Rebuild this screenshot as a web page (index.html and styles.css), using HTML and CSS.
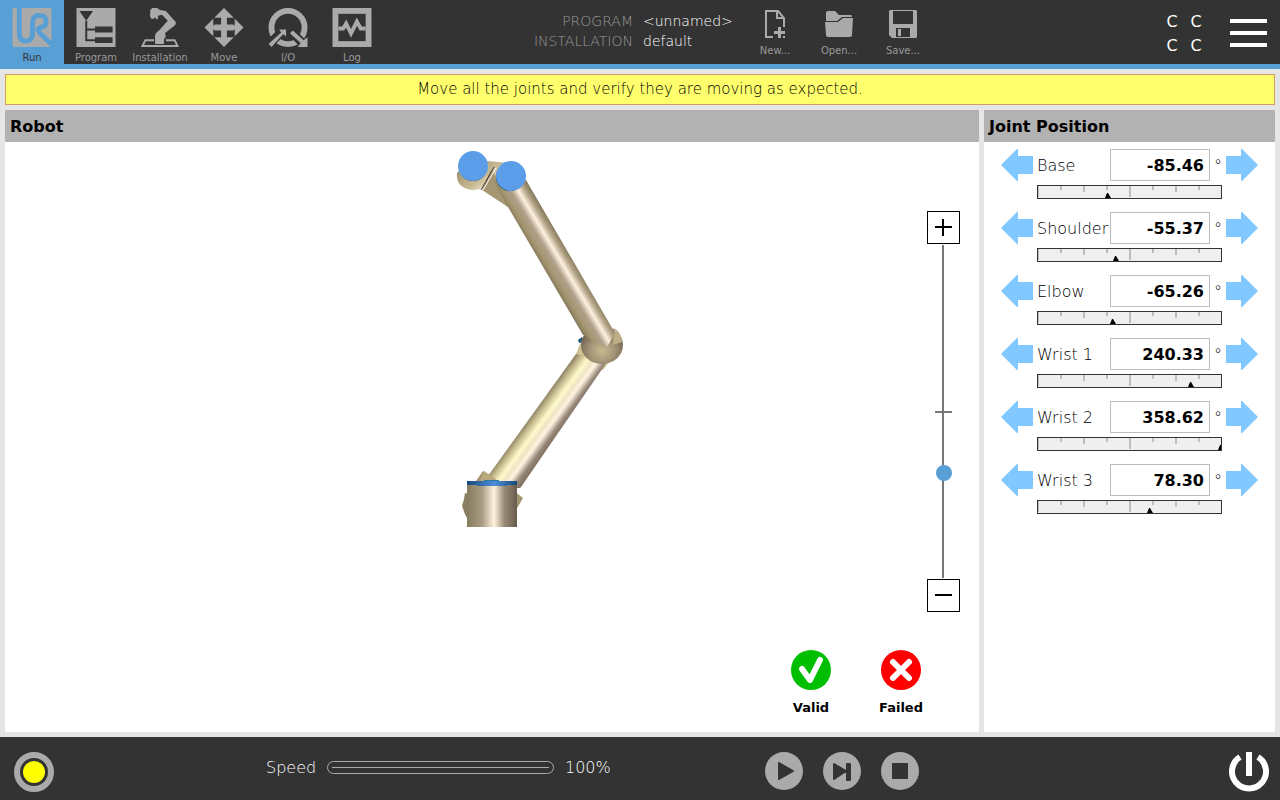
FILE: index.html
```html
<!DOCTYPE html>
<html lang="en">
<head>
  <meta charset="UTF-8">
  <title>Joint check</title>
  <link rel="stylesheet" href="styles.css">
</head>
<body>
  <!-- shared shapes -->
  <svg class="defs" aria-hidden="true">
    <symbol id="arrow-left" viewBox="0 0 32 32"><path d="M0 16L16 0h1v7h15v18H17v7h-1z"/></symbol>
    <symbol id="arrow-right" viewBox="0 0 32 32"><path d="M32 16L16 0h-1v7H0v18h15v7h1z"/></symbol>
    <g id="ticks" fill="#bdbdbd">
      <path d="M0 0h1v11h-1zM22 0h2v4h-2zM45 0h2v6h-2zM68 0h2v4h-2zM91 0h2v11h-2zM114 0h2v4h-2zM137 0h2v6h-2zM160 0h2v4h-2z"/>
    </g>
    <path id="marker" d="M-3 12L-1 7h1l3 5z"/>
  </svg>

  <header class="header">
    <nav class="tabs">
      <button class="tab active">
        <svg viewBox="0 0 40 40" width="40" height="40">
          <rect width="40" height="40" rx="2" fill="#aaa"/>
          <path d="M7 0V27q0 7 6.500 7t7-7V15q0-7.500 7-7.500t7 6.500q0 5-6 6-4 1-1 5 3 3 14 14" fill="none" stroke="#589fd5" stroke-width="5"/>
        </svg>
        <span>Run</span>
      </button>
      <button class="tab">
        <svg viewBox="0 0 40 40" width="40" height="40">
          <rect width="40" height="40" fill="#aaa"/>
          <path d="M3 3h14l-7 10zM19 19h18v6H19zM19 30h18v6H19z" fill="#333"/>
          <path d="M10 13v20h9M10 22h9" fill="none" stroke="#333" stroke-width="2"/>
        </svg>
        <span>Program</span>
      </button>
      <button class="tab">
        <svg viewBox="0 0 40 40" width="40" height="40" fill="#aaa">
          <path d="M10 2l2-2h5l3 2 6 1 8 9q4 3 1 6l-10 8q2 4-1 6v5H15v-6q-1-5 4-8l9-10-6-6-4 1v3l-2 1v-2h-2v1h-3q-2-2-1-5z"/>
          <path d="M14 33H5L2 39h36l-3-6h-9" fill="none" stroke="#aaa" stroke-width="2"/>
        </svg>
        <span>Installation</span>
      </button>
      <button class="tab">
        <svg viewBox="0 0 40 40" width="40" height="40">
          <path d="M20 0l20 20-20 20L0 20z" fill="#aaa"/>
          <path d="M9 10h8v7h-7v1H9zM31 10h-8v7h7v1h1zM9 30h8v-7h-7v-1H9zM31 30h-8v-7h7v-1h1z" fill="#333"/>
        </svg>
        <span>Move</span>
      </button>
      <button class="tab">
        <svg viewBox="0 0 40 40" width="40" height="40">
          <circle cx="20" cy="20" r="17" fill="none" stroke="#aaa" stroke-width="6"/>
          <path d="M-1 39l17-17M23 24l17 17" stroke="#333" stroke-width="9"/>
          <path d="M11 22h7v7l-3-2L3 40l-3-3 13-12zM25 23l11 10 4-3v10H30l3-4-11-10z" fill="#aaa"/>
        </svg>
        <span>I/O</span>
      </button>
      <button class="tab">
        <svg viewBox="0 0 40 40" width="40" height="40">
          <rect width="40" height="40" rx="1" fill="#aaa"/>
          <path d="M6 6h28v28H6z" fill="#333"/>
          <path d="M6 21h5l3-5 5 10 6-12 4 7h5" fill="none" stroke="#aaa" stroke-width="4"/>
        </svg>
        <span>Log</span>
      </button>
    </nav>

    <dl class="info">
      <dt>PROGRAM</dt><dd>&lt;unnamed&gt;</dd>
      <dt>INSTALLATION</dt><dd>default</dd>
    </dl>

    <div class="files">
      <button class="file">
        <svg viewBox="0 0 32 28" width="32" height="28">
          <path d="M14 27H7V1h12l6 7v9M18 1v7h7" fill="none" stroke="#aaa" stroke-width="2"/>
          <path d="M19 17h3v4h4v3h-4v4h-3v-4h-4v-3h4zM24 26h2v2h-2z" fill="#aaa"/>
        </svg>
        <span>New...</span>
      </button>
      <button class="file">
        <svg viewBox="0 0 32 28" width="32" height="28">
          <path d="M3 3q0-2 2-2h7l4 4h12q1 0 1 2H19l-5 4H3z" fill="#aaa"/>
          <path d="M2 12h13l5-4h10l-1 17q0 2-2 2H5q-2 0-2-2z" fill="#aaa"/>
        </svg>
        <span>Open...</span>
      </button>
      <button class="file">
        <svg viewBox="0 0 32 28" width="32" height="28">
          <path d="M3 0h26l1 1v26l-1 1H5l-3-3V1z" fill="#aaa"/>
          <path d="M6 1h20v13H6zM9 18h14v9H9z" fill="#333"/>
          <path d="M11 19h3v7h-3z" fill="#aaa"/>
        </svg>
        <span>Save...</span>
      </button>
    </div>

    <div class="checksum">
      <span>C</span><span>C</span><span>C</span><span>C</span>
    </div>
    <button class="menu" aria-label="Menu">
      <svg viewBox="0 0 37 28" width="37" height="28">
        <path d="M0 2h37M0 14h37M0 26h37" stroke="#fff" stroke-width="4"/>
      </svg>
    </button>
  </header>

  <main class="main">
    <p class="banner">Move all the joints and verify they are moving as expected.</p>

    <div class="panels">
      <section class="panel robot">
        <h2>Robot</h2>
        <div class="view">
          <svg class="arm" viewBox="357 142 270 390" width="270" height="390">
            <defs>
              <linearGradient id="upper" gradientUnits="userSpaceOnUse" x1="545" y1="270" x2="570" y2="255">
                <stop offset="0" stop-color="#897c5e"/>
                <stop offset=".15" stop-color="#a3956f"/>
                <stop offset=".4" stop-color="#b0a08a"/>
                <stop offset=".62" stop-color="#fff2e0"/>
                <stop offset=".82" stop-color="#b5a689"/>
                <stop offset="1" stop-color="#887b5e"/>
              </linearGradient>
              <linearGradient id="lower" gradientUnits="userSpaceOnUse" x1="533" y1="413" x2="563" y2="435">
                <stop offset="0" stop-color="#8d8262"/>
                <stop offset=".14" stop-color="#c5b98e"/>
                <stop offset=".33" stop-color="#fffacb"/>
                <stop offset=".46" stop-color="#efe5c4"/>
                <stop offset=".58" stop-color="#fff4e2"/>
                <stop offset=".76" stop-color="#968678"/>
                <stop offset="1" stop-color="#6e6052"/>
              </linearGradient>
              <linearGradient id="base">
                <stop offset="0" stop-color="#877b5e"/>
                <stop offset=".3" stop-color="#aa9c82"/>
                <stop offset=".54" stop-color="#fff3df"/>
                <stop offset=".75" stop-color="#978a75"/>
                <stop offset="1" stop-color="#685b4b"/>
              </linearGradient>
              <linearGradient id="lid">
                <stop offset="0" stop-color="#174a7c"/>
                <stop offset=".55" stop-color="#508edb"/>
                <stop offset="1" stop-color="#164577"/>
              </linearGradient>
              <radialGradient id="elbow" cx=".5" cy=".65" r=".6">
                <stop offset="0" stop-color="#c8bb8e"/>
                <stop offset=".5" stop-color="#a39478"/>
                <stop offset="1" stop-color="#6d5e4d"/>
              </radialGradient>
              <linearGradient id="wrist" x1="0" y1="0" x2="1" y2="1">
                <stop offset="0" stop-color="#8e805f"/>
                <stop offset=".4" stop-color="#c6b993"/>
                <stop offset=".55" stop-color="#eee0cb"/>
                <stop offset="1" stop-color="#8c7f62"/>
              </linearGradient>
            </defs>
            <path d="M483 471l12 8 23 15 5 4-7 12-20-2-28 11q-5-7-6-14l4-10z" fill="#a39570"/>
            <path d="M463 505l2-12 3 1v25q-4-5-5-14z" fill="#8b7d61"/>
            <path d="M578 340l4-3 2 5-5 1z" fill="#235d7b"/>
            <path d="M580 344l7-7 22 25-6 8-27-16z" fill="#cec28f"/>
            <path d="M576 354L488 476v12h32l1-1 86-125z" fill="url(#lower)"/>
            <path d="M484 471l12 8-4 6-12-5z" fill="#b8aa7e"/>
            <path d="M457 173q-1 10 6 14 7 5 17 2l7-5 20 23 13-24-10-20-24-2-16-3z" fill="url(#wrist)"/>
            <path d="M482 190l26 17-10-29-7-8z" fill="#a69773"/>
            <path d="M494 167l-13 23" stroke="#41352b" stroke-width="1"/>
            <path d="M496 168l-13 22" stroke="#fff" stroke-width="1"/>
            <ellipse cx="602" cy="345" rx="21" ry="19" fill="url(#elbow)"/>
            <path d="M614 328q8 5 8 14l-9 3z" fill="#bdae85"/>
            <path d="M494 181l32-1 89 153-8 14-9-3-15-9-75-128z" fill="url(#upper)"/>
            <circle cx="473" cy="167" r="14" fill="#174562"/>
            <circle cx="473" cy="166" r="15" fill="#5b9de9"/>
            <circle cx="510" cy="177" r="14" fill="#174562"/>
            <circle cx="511" cy="176" r="15" fill="#5b9de9"/>
            <path d="M467 484h50v43h-50z" fill="url(#base)"/>
            <path d="M467 481h17v-1h15v1h18v4h-10v1h-30v-1h-10z" fill="url(#lid)"/>
            <path d="M484 480h15v1h-15z" fill="#2b7c9b"/>
          </svg>

          <div class="zoom">
            <button aria-label="Zoom in"><svg viewBox="0 0 17 17" width="17" height="17"><path d="M0 8h17M8 0v17" stroke="#000" stroke-width="2"/></svg></button>
            <input type="range" min="0" max="200" value="61" aria-label="Zoom">
            <button aria-label="Zoom out"><svg viewBox="0 0 17 17" width="17" height="17"><path d="M0 8h17" stroke="#000" stroke-width="2"/></svg></button>
          </div>
        </div>

        <div class="verdict">
          <button>
            <svg viewBox="0 0 40 40" width="40" height="40">
              <circle cx="20" cy="20" r="20" fill="#00be00"/>
              <path d="M11 19l8 11 10-20" fill="none" stroke="#fff" stroke-width="6" stroke-linecap="round" stroke-linejoin="round"/>
            </svg>
            <span>Valid</span>
          </button>
          <button>
            <svg viewBox="0 0 40 40" width="40" height="40">
              <circle cx="20" cy="20" r="20" fill="#f00"/>
              <path d="M12 12l16 16M28 12L12 28" stroke="#fff" stroke-width="6" stroke-linecap="round"/>
            </svg>
            <span>Failed</span>
          </button>
        </div>
      </section>

      <section class="panel joints">
        <h2>Joint Position</h2>
        <div class="joint-list">
          <div class="joint">
            <button aria-label="Base minus"><svg width="32" height="32"><use href="#arrow-left"/></svg></button>
            <label for="base-pos">Base</label>
            <input type="text" id="base-pos" value="-85.46">
            <span class="unit">°</span>
            <button aria-label="Base plus"><svg width="32" height="32"><use href="#arrow-right"/></svg></button>
            <svg class="gauge" viewBox="0 0 183 12"><use href="#ticks"/><use href="#marker" x="70"/></svg>
          </div>
          <div class="joint">
            <button aria-label="Shoulder minus"><svg width="32" height="32"><use href="#arrow-left"/></svg></button>
            <label for="shoulder-pos">Shoulder</label>
            <input type="text" id="shoulder-pos" value="-55.37">
            <span class="unit">°</span>
            <button aria-label="Shoulder plus"><svg width="32" height="32"><use href="#arrow-right"/></svg></button>
            <svg class="gauge" viewBox="0 0 183 12"><use href="#ticks"/><use href="#marker" x="78"/></svg>
          </div>
          <div class="joint">
            <button aria-label="Elbow minus"><svg width="32" height="32"><use href="#arrow-left"/></svg></button>
            <label for="elbow-pos">Elbow</label>
            <input type="text" id="elbow-pos" value="-65.26">
            <span class="unit">°</span>
            <button aria-label="Elbow plus"><svg width="32" height="32"><use href="#arrow-right"/></svg></button>
            <svg class="gauge" viewBox="0 0 183 12"><use href="#ticks"/><use href="#marker" x="75"/></svg>
          </div>
          <div class="joint">
            <button aria-label="Wrist 1 minus"><svg width="32" height="32"><use href="#arrow-left"/></svg></button>
            <label for="wrist1-pos">Wrist 1</label>
            <input type="text" id="wrist1-pos" value="240.33">
            <span class="unit">°</span>
            <button aria-label="Wrist 1 plus"><svg width="32" height="32"><use href="#arrow-right"/></svg></button>
            <svg class="gauge" viewBox="0 0 183 12"><use href="#ticks"/><use href="#marker" x="153"/></svg>
          </div>
          <div class="joint">
            <button aria-label="Wrist 2 minus"><svg width="32" height="32"><use href="#arrow-left"/></svg></button>
            <label for="wrist2-pos">Wrist 2</label>
            <input type="text" id="wrist2-pos" value="358.62">
            <span class="unit">°</span>
            <button aria-label="Wrist 2 plus"><svg width="32" height="32"><use href="#arrow-right"/></svg></button>
            <svg class="gauge" viewBox="0 0 183 12"><use href="#ticks"/><use href="#marker" x="183"/></svg>
          </div>
          <div class="joint">
            <button aria-label="Wrist 3 minus"><svg width="32" height="32"><use href="#arrow-left"/></svg></button>
            <label for="wrist3-pos">Wrist 3</label>
            <input type="text" id="wrist3-pos" value="78.30">
            <span class="unit">°</span>
            <button aria-label="Wrist 3 plus"><svg width="32" height="32"><use href="#arrow-right"/></svg></button>
            <svg class="gauge" viewBox="0 0 183 12"><use href="#ticks"/><use href="#marker" x="112"/></svg>
          </div>
        </div>
      </section>
    </div>
  </main>

  <footer class="footer">
    <button class="state" aria-label="Robot state">
      <svg viewBox="0 0 40 40" width="40" height="40">
        <circle cx="20" cy="20" r="17" fill="none" stroke="#aaa" stroke-width="6"/>
        <circle cx="20" cy="20" r="11" fill="#ff0"/>
      </svg>
    </button>
    <div class="speed">
      <label for="speed">Speed</label>
      <input type="range" id="speed" min="0" max="100" value="100">
      <output for="speed">100%</output>
    </div>
    <div class="transport">
      <button aria-label="Play">
        <svg viewBox="0 0 38 38" width="38" height="38">
          <circle cx="19" cy="19" r="19" fill="#aaa"/>
          <path d="M14 11l14 8-14 8z" fill="#333" stroke="#333" stroke-width="2" stroke-linejoin="round"/>
        </svg>
      </button>
      <button aria-label="Step">
        <svg viewBox="0 0 38 38" width="38" height="38">
          <circle cx="19" cy="19" r="19" fill="#aaa"/>
          <path d="M11 12l12 7-12 8zM24 12h3v16h-3z" fill="#333" stroke="#333" stroke-width="2" stroke-linejoin="round"/>
        </svg>
      </button>
      <button aria-label="Stop">
        <svg viewBox="0 0 38 38" width="38" height="38">
          <circle cx="19" cy="19" r="19" fill="#aaa"/>
          <rect x="11" y="11" width="16" height="16" rx="1" fill="#333"/>
        </svg>
      </button>
    </div>
    <button class="power" aria-label="Power">
      <svg viewBox="0 0 40 40" width="40" height="40">
        <path d="M11 5a17 17 0 1 0 18 0" fill="none" stroke="#fff" stroke-width="6"/>
        <path d="M17 0h6v24h-6z" fill="#fff"/>
      </svg>
    </button>
  </footer>
</body>
</html>
```

FILE: styles.css
```css
* {
  box-sizing: border-box;
}
body {
  margin: 0;
  min-height: 100vh;
  display: flex;
  flex-direction: column;
  font-family: "DejaVu Sans", sans-serif;
  font-weight: 200;
  font-size: 16px;
  color: #000;
  background: #e5e5e5;
}
button {
  margin: 0;
  padding: 0;
  border: none;
  background: none;
  font: inherit;
  color: inherit;
  cursor: pointer;
}
svg {
  display: block;
}
.defs {
  position: absolute;
  width: 0;
  height: 0;
}

/* header */
.header {
  display: flex;
  height: 69px;
  background: #333;
  border-bottom: 5px solid #589fd5;
}
.tabs,
.files {
  display: flex;
}
.tab,
.file {
  width: 64px;
  display: flex;
  flex-direction: column;
  align-items: center;
  font-size: 10px;
  font-weight: 400;
  line-height: 12px;
  color: #999;
}
.tab {
  padding-top: 8px;
  gap: 5px;
}
.file {
  padding-top: 10px;
  gap: 7px;
}
.tab.active {
  background: #589fd5;
  color: #333;
}
.info {
  display: grid;
  grid-template-columns: 249px 90px;
  column-gap: 10px;
  align-content: start;
  margin: 0 10px 0 0;
  padding-top: 11px;
  font-size: 14px;
  line-height: 20px;
}
.info dt {
  text-align: right;
  color: #999;
}
.info dd {
  margin: 0;
  color: #fff;
}
.checksum {
  display: grid;
  grid-template-columns: 24px 24px;
  grid-auto-rows: 24px;
  align-content: start;
  margin-left: auto;
  padding-top: 10px;
  font-size: 16px;
  font-weight: 400;
  line-height: 24px;
  text-align: center;
  color: #fff;
}
.menu {
  margin: 0 13px 0 22px;
  padding-top: 1px;
}

/* content */
.main {
  flex: 1;
  display: flex;
  flex-direction: column;
  gap: 5px;
  padding: 5px;
}
.banner {
  margin: 0;
  border: 1px solid #cc9e62;
  background: #ffff6e;
  font-size: 15px;
  line-height: 29px;
  text-align: center;
}
.panels {
  flex: 1;
  display: flex;
  gap: 5px;
}
.panel {
  background: #fff;
}
.panel h2 {
  margin: 0;
  padding: 1px 5px 0;
  background: #b2b2b2;
  font-size: 16px;
  font-weight: 700;
  line-height: 31px;
}
.robot {
  flex: 1;
  display: flex;
  flex-direction: column;
}
.view {
  flex: 1;
  display: grid;
  grid-template-columns: 1fr auto 1fr;
}
.arm {
  grid-column: 2;
}
.zoom {
  display: flex;
  flex-direction: column;
  align-items: center;
  gap: 1px;
  justify-self: end;
  padding: 69px 19px 0 0;
}
.zoom button {
  width: 33px;
  height: 33px;
  display: flex;
  align-items: center;
  justify-content: center;
  border: 1px solid #000;
  background: #fff;
}
.zoom input {
  -webkit-appearance: none;
  appearance: none;
  writing-mode: vertical-lr;
  direction: rtl;
  width: 17px;
  height: 333px;
  margin: 0;
  background:
    linear-gradient(#777, #777) center / 100% 2px no-repeat,
    linear-gradient(#777, #777) 7px 0 / 2px 100% no-repeat;
}
.zoom input::-webkit-slider-thumb {
  -webkit-appearance: none;
  width: 16px;
  height: 16px;
  border-radius: 50%;
  background: #589fd5;
}
.verdict {
  display: flex;
  justify-content: flex-end;
  padding: 0 33px 16px 0;
}
.verdict button {
  width: 90px;
  display: flex;
  flex-direction: column;
  align-items: center;
  gap: 9px;
  font-size: 13px;
  font-weight: 700;
  line-height: 17px;
}

/* joints */
.joints {
  width: 291px;
}
.joints h2 {
  white-space: nowrap;
}
.joint-list {
  display: flex;
  flex-direction: column;
  gap: 13px;
  padding: 7px 17px;
}
.joint {
  display: grid;
  grid-template-columns: 36px 73px 100px 16px 32px;
  grid-template-rows: 32px 14px;
  row-gap: 4px;
  align-items: center;
}
.joint label {
  white-space: nowrap;
}
.joint button svg {
  fill: #80c8ff;
}
.joint input {
  width: 100px;
  height: 32px;
  padding: 0 5px;
  border: 1px solid #bdbdbd;
  background: #fff;
  font: 700 16px "DejaVu Sans", sans-serif;
  text-align: right;
}
.unit {
  text-align: center;
}
.gauge {
  grid-column: 2 / span 3;
  width: 185px;
  height: 14px;
  border: 1px solid #333;
  background: #efefef;
}

/* footer */
.footer {
  display: flex;
  align-items: center;
  height: 63px;
  padding: 6px 11px 0 14px;
  background: #333;
  color: #fff;
}
.speed {
  display: flex;
  align-items: center;
  margin: 0 0 8px 212px;
}
.speed label {
  width: 61px;
}
.speed input {
  -webkit-appearance: none;
  appearance: none;
  width: 227px;
  height: 13px;
  margin: 0 11px 0 0;
  border: 1px solid #aaa;
  border-radius: 7px;
  background: linear-gradient(#aaa, #aaa) center / 217px 1px no-repeat;
}
.speed input::-webkit-slider-thumb {
  -webkit-appearance: none;
  width: 1px;
  height: 11px;
  background: transparent;
}
.speed output {
  width: 200px;
}
.transport {
  display: flex;
  gap: 20px;
  margin-bottom: 2px;
}
.power {
  margin-left: auto;
}
```
